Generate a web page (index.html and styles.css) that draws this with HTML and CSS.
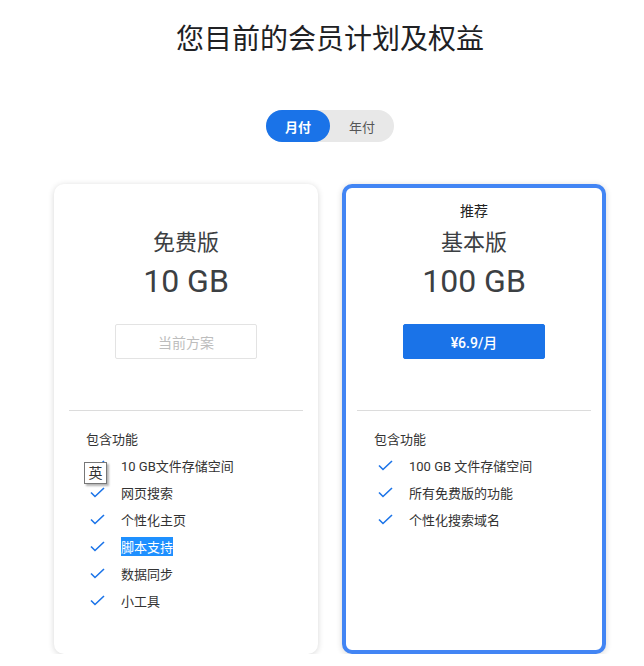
FILE: index.html
```html
<!DOCTYPE html>
<html lang="zh-CN">
<head>
  <meta charset="UTF-8" />
  <meta name="viewport" content="width=device-width, initial-scale=1.0"/>
  <title>会员计划</title>
  <link rel="stylesheet" href="styles.css">
</head>
<body>
  <div class="container">
    <h1>您目前的会员计划及权益</h1>

    <div class="toggle">
      <span class="opt active">月付</span>
      <span class="opt">年付</span>
    </div>

    <div class="plans">
      <div class="card">
        <div class="badge"></div>
        <div class="plan-name">免费版</div>
        <div class="plan-size">10 GB</div>
        <button class="btn btn-current">当前方案</button>
        <hr class="divider">
        <div class="features">
          <div class="features-title">包含功能</div>
          <ul>
            <li><svg class="check" viewBox="0 0 15 11"><polyline points="1,5.5 5,9.5 14,1"/></svg><span>10 GB文件存储空间</span></li>
            <li><svg class="check" viewBox="0 0 15 11"><polyline points="1,5.5 5,9.5 14,1"/></svg><span>网页搜索</span></li>
            <li><svg class="check" viewBox="0 0 15 11"><polyline points="1,5.5 5,9.5 14,1"/></svg><span>个性化主页</span></li>
            <li><svg class="check" viewBox="0 0 15 11"><polyline points="1,5.5 5,9.5 14,1"/></svg><span class="selected">脚本支持</span></li>
            <li><svg class="check" viewBox="0 0 15 11"><polyline points="1,5.5 5,9.5 14,1"/></svg><span>数据同步</span></li>
            <li><svg class="check" viewBox="0 0 15 11"><polyline points="1,5.5 5,9.5 14,1"/></svg><span>小工具</span></li>
          </ul>
        </div>
        <div class="ime">英</div>
      </div>

      <div class="card recommended">
        <div class="badge">推荐</div>
        <div class="plan-name">基本版</div>
        <div class="plan-size">100 GB</div>
        <button class="btn btn-buy">¥6.9/月</button>
        <hr class="divider">
        <div class="features">
          <div class="features-title">包含功能</div>
          <ul>
            <li><svg class="check" viewBox="0 0 15 11"><polyline points="1,5.5 5,9.5 14,1"/></svg><span>100 GB 文件存储空间</span></li>
            <li><svg class="check" viewBox="0 0 15 11"><polyline points="1,5.5 5,9.5 14,1"/></svg><span>所有免费版的功能</span></li>
            <li><svg class="check" viewBox="0 0 15 11"><polyline points="1,5.5 5,9.5 14,1"/></svg><span>个性化搜索域名</span></li>
          </ul>
        </div>
      </div>
    </div>
  </div>
</body>
</html>
```
FILE: styles.css
```css
body {
  margin: 0;
  background: #fff;
  font-family: Roboto, "Noto Sans CJK SC", sans-serif;
  color: #333;
}
.container {
  width: 552px;
  margin-left: 54px;
}
h1 {
  margin: 20px 0 0;
  font-size: 28px;
  line-height: 40px;
  font-weight: 400;
  text-align: center;
  color: #202124;
}
.toggle {
  display: flex;
  width: 128px;
  height: 32px;
  margin: 50px auto 0;
  background: #e8e8e8;
  border-radius: 16px;
}
.opt {
  flex: 1;
  display: flex;
  align-items: center;
  justify-content: center;
  font-size: 13px;
  color: #555;
  border-radius: 16px;
}
.opt.active {
  background: #1a73e8;
  color: #fff;
  font-weight: 700;
}
.plans {
  display: flex;
  gap: 24px;
  margin-top: 42px;
}
.card {
  position: relative;
  box-sizing: border-box;
  width: 264px;
  height: 470px;
  padding: 13px 11px 0;
  border: 4px solid transparent;
  border-radius: 10px;
  background: #fff;
  box-shadow: 0 1px 6px rgba(0, 0, 0, 0.16);
  text-align: center;
}
.card.recommended {
  border-color: #4285f4;
}
.badge {
  height: 20px;
  line-height: 20px;
  font-size: 14px;
  color: #222;
}
.plan-name {
  margin-top: 7px;
  font-size: 22px;
  line-height: 30px;
  color: #3c4043;
}
.plan-size {
  margin-top: 3px;
  font-size: 32px;
  line-height: 40px;
  color: #3c4043;
}
.btn {
  display: block;
  width: 142px;
  height: 35px;
  margin: 23px auto 0;
  font-family: inherit;
  font-size: 14px;
  border-radius: 2px;
}
.btn-current {
  background: #fff;
  border: 1px solid #e3e3e3;
  color: #bdbdbd;
}
.btn-buy {
  background: #1a73e8;
  border: 1px solid #1a73e8;
  color: #fff;
  font-weight: 500;
}
.divider {
  margin: 51px 0 0;
  border: none;
  border-top: 1px solid #dcdcdc;
}
.features {
  padding-left: 17px;
  text-align: left;
}
.features-title {
  margin-top: 19px;
  font-size: 13px;
  line-height: 20px;
  color: #333;
}
.features ul {
  list-style: none;
  margin: 2px 0 0;
  padding: 0;
}
.features li {
  display: flex;
  align-items: center;
  height: 27px;
  font-size: 13px;
  color: #333;
}
.check {
  width: 15px;
  height: 11px;
  margin: 0 16px 0 4px;
  fill: none;
  stroke: #1a73e8;
  stroke-width: 1.6;
}
.selected {
  background: #1e90ff;
  color: #fff;
}
.ime {
  position: absolute;
  left: 26px;
  top: 274px;
  width: 21px;
  height: 20px;
  line-height: 20px;
  text-align: center;
  font-size: 14px;
  color: #333;
  background: #fff;
  border: 1px solid #777;
  box-shadow: 2px 2px 2px rgba(0, 0, 0, 0.3);
}
```
